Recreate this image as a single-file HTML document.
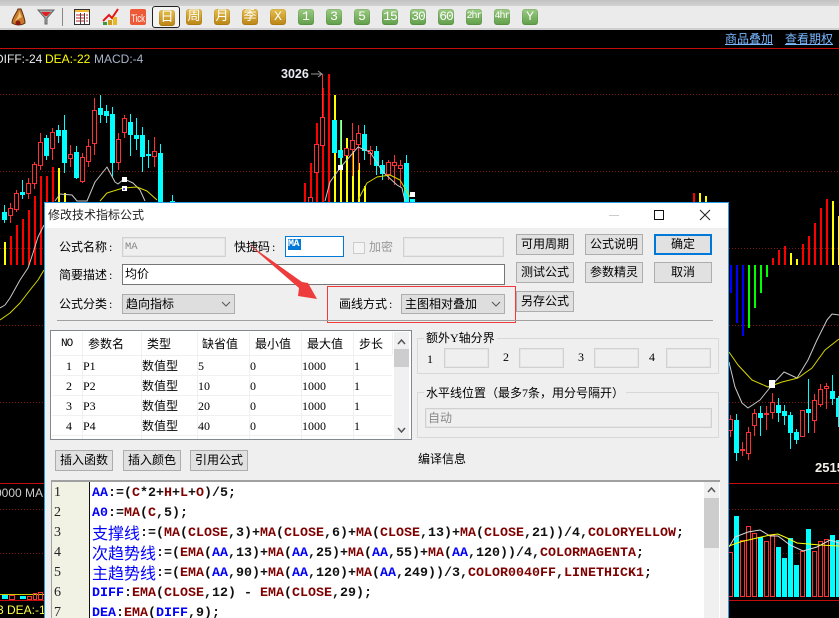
<!DOCTYPE html>
<html><head><meta charset="utf-8"><style>
html,body{margin:0;padding:0;background:#000;overflow:hidden}
#p{position:relative;width:839px;height:618px;overflow:hidden;background:#000;font-family:"Liberation Serif","WenQuanYi Zen Hei","Noto Sans CJK SC",sans-serif;font-size:12px;color:#000}
#p div,#p span.a,#p a{position:absolute;box-sizing:border-box}
em{font-style:normal;margin-left:2px}
.l{white-space:nowrap;line-height:16px;height:16px}
.tb{width:16px;height:16px;top:9px;border-radius:3px;color:#fff;text-align:center;font:13px/16px "Liberation Mono","WenQuanYi Zen Hei",monospace;box-shadow:inset 0 0 0 1px rgba(0,0,0,.08)}
.g{background:linear-gradient(#e6c050,#ba8414)}
.n{background:linear-gradient(#9ccb84,#5f9e48)}
.b{background:#e1e1e1;border:1.5px solid #adadad;height:21px;width:58px;text-align:center;line-height:18px;white-space:nowrap;font-size:12px}
.i{background:#efefef;border:1px solid #d0d0d0;box-shadow:inset 0 0 0 1px #e6e6e6;height:20px}
.s{background:#dedede;border:1px solid #adadad;height:20px;line-height:18px;padding-left:3px;white-space:nowrap}
.gb{border:1px solid #d8d8d8;left:417px;width:302px}
.c{left:92px;margin-top:2px;white-space:pre;font:bold 13.33px/20px "Liberation Mono",monospace;height:20px;color:#111}
.c u{text-decoration:none;color:#0000ff}.c i{font-style:normal;color:#800000}
.c b{display:inline-block;position:relative;top:-2px;height:20px;vertical-align:top;font:16px/20px "WenQuanYi Zen Hei","Noto Sans CJK SC",sans-serif;color:#0000ff}
.n1{left:54px;margin-top:1px;font:14px/20px "Liberation Serif",serif;color:#222;height:20px}
</style></head><body><div id="p">
<!-- toolbar -->
<div style="left:0;top:0;width:839px;height:6px;background:linear-gradient(#c2c2c2,#d2d2d2)"></div>
<div style="left:0;top:6px;width:839px;height:22px;background:#ebebeb"></div>
<div style="left:0;top:28px;width:839px;height:2px;background:#cfcfcf"></div>
<svg style="position:absolute;left:0;top:0" width="150" height="30">
<path d="M12 23C12 18 16 14 18 9L21 9C23 14 25 19 25 23C21 26 15 25 12 23Z" fill="#c77a2c" stroke="#5c2d0c"/><path d="M15 21C18 17 19 14 19 11L22 17Z" fill="#f0c070"/><circle cx="18" cy="23" r="2.500" fill="#8a1c10"/>
<path d="M38 10H54L47 18V24H45V18Z" fill="#aaa" stroke="#666"/><path d="M41 12H51L47 16H45Z" fill="#e02020"/>
<rect x="62" y="8" width="1" height="18" fill="#888"/>
<rect x="74.500" y="9.500" width="15" height="15" fill="#fff" stroke="#333"/><rect x="75" y="10" width="14" height="2" fill="#f2b830"/><path d="M76 15H88M76 18H88M76 21H88" stroke="#c02020" stroke-dasharray="4 1"/><path d="M80.500 13V24M84.500 13V24" stroke="#444"/>
<path d="M103 21L109 15L112 18L118 9" fill="none" stroke="#e01818" stroke-width="2"/><rect x="103" y="22" width="4" height="3" fill="#3a9a3a"/><rect x="108" y="20" width="4" height="5" fill="#d09a20"/><rect x="113" y="17" width="4" height="8" fill="#e8b820"/>
<rect x="130" y="9" width="16" height="16" rx="2" fill="#ee5a38"/>
<text x="131" y="22" font-family="Liberation Sans" font-size="11" fill="#fff" textLength="14" lengthAdjust="spacingAndGlyphs">Tick</text>
</svg>
<div style="left:152px;top:6px;width:28px;height:22px;border:1px solid #222;border-radius:3px;background:#f4f4f4"></div>
<div class="tb g" style="left:159px;top:10px;width:16px">日</div>
<div class="tb g" style="left:186px">周</div><div class="tb g" style="left:214px">月</div><div class="tb g" style="left:242px">季</div><div class="tb g" style="left:270px">X</div>
<div class="tb n" style="left:298px">1</div><div class="tb n" style="left:326px">3</div><div class="tb n" style="left:354px">5</div>
<div class="tb n" style="left:382px;letter-spacing:-1px">15</div><div class="tb n" style="left:410px;letter-spacing:-1px">30</div><div class="tb n" style="left:438px;letter-spacing:-1px">60</div>
<div class="tb n" style="left:466px;font-size:10px;letter-spacing:-1px">2hr</div><div class="tb n" style="left:494px;font-size:10px;letter-spacing:-1px">4hr</div><div class="tb n" style="left:522px">Y</div>
<!-- chart -->
<svg style="position:absolute;left:0;top:0" width="839" height="618">
<g stroke="#7a1414" stroke-dasharray="1 2" fill="none"><path d="M0 94.500H839M0 171.500H839M0 248.500H839M0 325.500H839M0 402.500H839M0 509.500H839M0 553.500H839"/></g>
<path d="M0 48.500H839M0 483.500H839M0 600.500H839" stroke="#c40c0c" fill="none"/>
<g fill="#ff0000">
<path d="M10 236h2v29h-2zM16 225h2v40h-2zM22 219h2v46h-2zM28 210h2v55h-2zM34 196h2v69h-2zM40 176h2v89h-2zM46 176h2v30h-2zM52 167h2v40h-2zM304 183h2v20h-2zM310 163h2v40h-2zM316 123h2v80h-2zM322 88h2v115h-2zM328 74h2v129h-2z"/>
<path d="M772 258h2v7h-2zM778 250h2v15h-2zM784 246h2v19h-2zM802 244h2v21h-2zM808 236h2v29h-2zM814 223h2v42h-2zM820 208h2v57h-2zM826 199h2v66h-2zM693 193h2v10h-2z"/>
</g>
<g fill="#ffff00">
<path d="M4 242h2v23h-2zM58 168h2v35h-2zM64 193h2v10h-2zM334 95h2v108h-2zM340 120h2v83h-2zM346 138h2v65h-2zM352 151h2v52h-2zM358 163h2v40h-2zM364 186h2v17h-2z"/>
<path d="M790 253h2v12h-2zM796 259h2v6h-2zM832 201h2v64h-2zM838 216h2v49h-2zM699 193h2v10h-2zM705 196h2v7h-2z"/>
</g>
<path d="M730 265h2v28h-2zM736 265h2v58h-2zM742 265h2v71h-2z" fill="#0000ff"/>
<path d="M748 265h2v63h-2zM754 265h2v43h-2zM760 265h2v28h-2zM766 265h2v12h-2z" fill="#00ff00"/>
<!-- wicks cyan -->
<path fill="none" stroke="#00ffff" d="M4.500 205V223M22.500 180V199M46.500 135V160M58.500 125V143M64.500 115V173M76.500 146V179M100.500 95V123M106.500 105V123M112.500 107V177M130.500 114V156M136.500 118V150M142.500 127V172M148.500 140V168M160.500 144V203M172.500 195V203M340.500 120V165M364.500 125V160M376.500 146V175M382.500 160V180M406.500 155V203M736.500 414V461M760.500 406V436M778.500 398V422M784.500 405V425M790.500 412V449M796.500 429V444M808.500 379V433M832.500 375V405M838.500 396V427"/>
<!-- wicks red -->
<path fill="none" stroke="#ff3030" d="M10.500 203V223M16.500 190V212M28.500 178V199M34.500 162V189M40.500 133V170M52.500 128V160M70.500 145V167M82.500 153V183M88.500 139V167M94.500 98V155M118.500 133V170M124.500 115V138M154.500 137V167M352.500 123V176M358.500 125V170M370.500 146V165M388.500 160V180M394.500 155V185M400.500 160V187M322.500 74V117M730.500 415V437M742.500 442V456M748.500 427V460M754.500 409V436M766.500 406V430M772.500 393V419M814.500 394V433M820.500 384V407M826.500 383V409"/>
<path d="M311 74H321M318 71L322 74L318 77" stroke="#999" fill="none"/>
<!-- cyan bodies -->
<path fill="#00ffff" d="M2 212h5v8h-5zM20 192h5v3h-5zM44 138h5v18h-5zM56 130h5v6h-5zM62 130h5v33h-5zM74 152h5v26h-5zM98 108h5v7h-5zM104 111h5v5h-5zM110 114h5v49h-5zM128 122h5v13h-5zM134 135h5v4h-5zM140 135h5v22h-5zM146 154h5v2h-5zM158 153h5v50h-5zM170 201h5v2h-5zM332 120h5v33h-5zM338 150h5v8h-5zM362 134h5v17h-5zM374 151h5v15h-5zM380 165h5v9h-5zM404 163h5v40h-5zM410 199h5v4h-5zM734 420h5v33h-5zM758 413h5v5h-5zM776 405h5v8h-5zM782 411h5v5h-5zM788 415h5v18h-5zM794 432h5v8h-5zM806 409h5v4h-5zM830 391h5v8h-5zM836 398h3v19h-3z"/>
<!-- red bodies -->
<path fill="#000" stroke="#ff3030" d="M8.500 208.500h4v7h-4zM14.500 193.500h4v16h-4zM26.500 183.500h4v10h-4zM32.500 164.500h4v19h-4zM38.500 142.500h4v23h-4zM50.500 132.500h4v16h-4zM68.500 154.500h4v4h-4zM80.500 157.500h4v24h-4zM86.500 146.500h4v15h-4zM92.500 110.500h4v33h-4zM116.500 139.500h4v23h-4zM122.500 118.500h4v14h-4zM152.500 151.500h4v5h-4zM314.500 144.500h4v28h-4zM320.500 117.500h4v28h-4zM344.500 148.500h4v7h-4zM350.500 140.500h4v9h-4zM356.500 133.500h4v11h-4zM368.500 150.500h4v3h-4zM386.500 162.500h4v12h-4zM392.500 162.500h4v3h-4zM398.500 165.500h4v3h-4zM308.500 197.500h4v6h-4zM728.500 419.500h4v11h-4zM740.500 449.500h4v1h-4zM746.500 432.500h4v21h-4zM752.500 413.500h4v12h-4zM764.500 413.500h4v1h-4zM770.500 402.500h4v10h-4zM800.500 410.500h4v26h-4zM812.500 400.500h4v20h-4zM818.500 389.500h4v15h-4zM824.500 386.500h4v2h-4z"/>
<!-- MA lines -->
<g fill="none" stroke-linejoin="round">
<path stroke="#c8c8c8" d="M0 308L5 305L10 298L20 280L28 268L33 253L38 237L44 225M55 201L60 194L72 195L77 201L87 201L95 182L107 167L115 182L118 184L124 179L133 183L140 190L145 201M325 201L330 182L340 168L358 147L370 152L383 172L397 185L402 188L405 201M729 362L735 387L742 403L748 408L760 400L772 385L784 372L797 378L808 360L817 340L827 320L832 314L839 315"/>
<path stroke="#d8d800" d="M0 320L10 313L20 303L30 290L38 280L44 270M100 201L107 193L123 188L137 187L147 191L157 200M358 200L367 183L377 177L390 175L400 180L410 197M729 352L738 365L752 380L768 387L782 382L798 378L812 368L825 350L839 339"/>
</g>
<path fill="#fff" d="M122 177h5v5h-5zM122 186h5v5h-5zM338 165h5v5h-5zM410 192h5v5h-5zM769 380h6v4h-6zM769 384h6v4h-6z"/>
<path fill="#55f" d="M123 188h2v2h-2z"/>
<!-- volume -->
<path fill="#00ffff" d="M734 516h5v81h-5zM758 537h5v60h-5zM776 547h5v50h-5zM782 558h5v39h-5zM788 538h5v59h-5zM794 565h5v32h-5zM806 529h5v68h-5zM830 535h5v62h-5zM836 540h3v57h-3z"/>
<path fill="#000" stroke="#ff3030" d="M728.500 552.500h4v44h-4zM740.500 540.500h4v56h-4zM746.500 526.500h4v70h-4zM752.500 533.500h4v63h-4zM764.500 541.500h4v55h-4zM770.500 535.500h4v61h-4zM800.500 551.500h4v45h-4zM812.500 551.500h4v45h-4zM818.500 541.500h4v55h-4zM824.500 539.500h4v57h-4z"/>
<path fill="none" stroke="#ddd" d="M729 547L735 537L748 532L760 530L770 536L778 536L790 545L803 551L817 547L830 540L839 543"/>
<path fill="none" stroke="#ffff00" d="M729 546L740 542L757 538L770 535L778 534L787 538L797 543L820 545L839 546"/>
<!-- bottom left mini -->
<path d="M0 594.500H44" stroke="#ffff00" opacity=".8"/>
<path d="M2 595h6v4h-6zM20 596h6v3h-6z" fill="#00ffff"/>
<path d="M9.500 595.500h5v4h-5zM27.500 596.500h4v3h-4zM33.500 593.500h3v6h-3zM38.500 592.500h4v7h-4z" fill="none" stroke="#ff3030"/>
</svg>
<span class="a l" style="left:-5px;top:51px;font:12px/16px 'Liberation Sans',sans-serif;color:#e8e8e8">DIFF:-24</span>
<span class="a l" style="left:45px;top:51px;font:12px/16px 'Liberation Sans',sans-serif;color:#ffff00">DEA:-22</span>
<span class="a l" style="left:94px;top:51px;font:12px/16px 'Liberation Sans',sans-serif;color:#a8b4c8">MACD:-4</span>
<span class="a l" style="left:281px;top:66px;font:bold 12.500px/16px 'Liberation Sans',sans-serif;color:#e8ecf4">3026</span>
<span class="a l" style="left:815px;top:460px;font:bold 13px/16px 'Liberation Sans',sans-serif;color:#f4f0e8">2515</span>
<span class="a l" style="left:-5px;top:485px;font:12px/16px 'Liberation Sans',sans-serif;color:#ccc">0000 MA</span>
<span class="a l" style="left:-3px;top:602px;font:12px/16px 'Liberation Sans',sans-serif;color:#ffff40">3 DEA:-1</span>
<a class="l" style="left:725px;top:31px;font-size:12px;color:#7ab8ff;text-decoration:underline">商品叠加</a>
<a class="l" style="left:785px;top:31px;font-size:12px;color:#7ab8ff;text-decoration:underline">查看期权</a>
<!-- dialog -->
<div style="left:44px;top:202px;width:685px;height:420px;background:#efefef;border:1px solid #2a9fe8">
</div>
<div style="left:45px;top:203px;width:683px;height:25px;background:#fff"></div>
<div class="l" style="left:48px;top:207px;font-size:12px;color:#222">修改技术指标公式</div>
<svg style="position:absolute;left:600px;top:205px" width="120" height="20"><path d="M9 10.500H19" stroke="#ccc"/><rect x="54.500" y="5.500" width="9" height="9" fill="none" stroke="#111"/><path d="M100 5L110 15M110 5L100 15" stroke="#222" fill="none"/></svg>

<div class="l" style="left:59px;top:239px">公式名称<em>:</em></div>
<div class="i" style="left:122px;top:237px;width:104px;font:10.500px/18px 'Liberation Mono',monospace;color:#888;padding-left:2px">MA</div>
<div class="l" style="left:234px;top:239px">快捷码<em>:</em></div>
<div style="left:285px;top:236px;width:59px;height:21px;background:#fff;border:1px solid #0078d7"></div>
<div style="left:288px;top:239px;width:13px;height:11px;background:#0078d7;color:#fff;font:bold 10px/11px 'Liberation Mono',monospace;letter-spacing:-.5px">MA</div>
<div style="left:353px;top:242px;width:12px;height:12px;border:1px solid #ccc;background:#f4f4f4"></div>
<div class="l" style="left:369px;top:239px;font-size:12px;color:#999">加密</div>
<div class="i" style="left:403px;top:237px;width:101px"></div>
<div class="l" style="left:59px;top:267px">简要描述<em>:</em></div>
<div style="left:122px;top:264px;width:383px;height:21px;background:#fff;border:1px solid #767676;padding-left:2px;line-height:18px">均价</div>
<div class="l" style="left:59px;top:296px">公式分类<em>:</em></div>
<div class="s" style="left:122px;top:294px;width:113px">趋向指标</div>
<div class="l" style="left:339px;top:296px">画线方式<em>:</em></div>
<div class="s" style="left:401px;top:294px;width:104px">主图相对叠加</div>
<svg style="position:absolute;left:0;top:0" width="839" height="618">
<path d="M222 302L226 306L230 302M492 302L496 306L500 302" fill="none" stroke="#555"/>
<rect x="327.500" y="286.500" width="188" height="36" fill="none" stroke="#f23a3a"/>
</svg>
<div style="left:57px;top:320px;width:656px;height:1px;background:#a0a0a0"></div>
<div class="b" style="left:516px;top:234px">可用周期</div><div class="b" style="left:585px;top:234px">公式说明</div>
<div class="b" style="left:654px;top:234px;border:2px solid #0078d7;line-height:17px">确定</div>
<div class="b" style="left:516px;top:262px">测试公式</div><div class="b" style="left:585px;top:262px">参数精灵</div><div class="b" style="left:654px;top:262px">取消</div>
<div class="b" style="left:516px;top:291px">另存公式</div>
<!-- table -->
<div style="left:50px;top:330px;width:362px;height:110px;background:#fff;border:1px solid #828790"></div>
<svg style="position:absolute;left:0;top:0" width="420" height="445">
<path d="M82.500 332V439M141.500 332V439M197.500 332V439M249.500 332V439M301.500 332V439M353.500 332V439M392.500 332V355" stroke="#f0f0f0" fill="none"/>
<path d="M52 355.500H392M52 375.500H392M52 395.500H392M52 415.500H392M52 435.500H392" stroke="#f0f0f0" fill="none"/>
<rect x="394" y="332" width="15" height="107" fill="#f0f0f0"/><rect x="394" y="349" width="15" height="18" fill="#cdcdcd"/>
<path d="M398 344L401.500 340L405 344M398 428L401.500 432L405 428" fill="none" stroke="#555" stroke-width="1.500"/>
</svg>
<div class="l" style="left:61px;top:336px;font-size:11px;font-family:'Liberation Mono',monospace;letter-spacing:-1px">NO</div>
<div class="l" style="left:88px;top:336px">参数名</div><div class="l" style="left:147px;top:336px">类型</div><div class="l" style="left:202px;top:336px">缺省值</div><div class="l" style="left:255px;top:336px">最小值</div><div class="l" style="left:307px;top:336px">最大值</div><div class="l" style="left:359px;top:336px">步长</div>
<div class="l" style="left:66px;top:358px">1</div><div class="l" style="left:83px;top:358px">P1</div><div class="l" style="left:142px;top:358px">数值型</div><div class="l" style="left:198px;top:358px">5</div><div class="l" style="left:250px;top:358px">0</div><div class="l" style="left:302px;top:358px">1000</div><div class="l" style="left:354px;top:358px">1</div>
<div class="l" style="left:66px;top:378px">2</div><div class="l" style="left:83px;top:378px">P2</div><div class="l" style="left:142px;top:378px">数值型</div><div class="l" style="left:198px;top:378px">10</div><div class="l" style="left:250px;top:378px">0</div><div class="l" style="left:302px;top:378px">1000</div><div class="l" style="left:354px;top:378px">1</div>
<div class="l" style="left:66px;top:398px">3</div><div class="l" style="left:83px;top:398px">P3</div><div class="l" style="left:142px;top:398px">数值型</div><div class="l" style="left:198px;top:398px">20</div><div class="l" style="left:250px;top:398px">0</div><div class="l" style="left:302px;top:398px">1000</div><div class="l" style="left:354px;top:398px">1</div>
<div class="l" style="left:66px;top:418px">4</div><div class="l" style="left:83px;top:418px">P4</div><div class="l" style="left:142px;top:418px">数值型</div><div class="l" style="left:198px;top:418px">40</div><div class="l" style="left:250px;top:418px">0</div><div class="l" style="left:302px;top:418px">1000</div><div class="l" style="left:354px;top:418px">1</div>
<div class="b" style="left:55px;top:450px">插入函数</div><div class="b" style="left:123px;top:450px">插入颜色</div><div class="b" style="left:190px;top:450px">引用公式</div>
<div class="l" style="left:418px;top:451px">编译信息</div>
<!-- groups -->
<div class="gb" style="top:338px;height:36px"></div>
<div class="l" style="left:424px;top:330px;background:#efefef;padding:0 2px">额外Y轴分界</div>
<div class="l" style="left:427px;top:351px">1</div><div class="i" style="left:444px;top:348px;width:45px"></div>
<div class="l" style="left:503px;top:349px">2</div><div class="i" style="left:519px;top:348px;width:45px"></div>
<div class="l" style="left:578px;top:349px">3</div><div class="i" style="left:594px;top:348px;width:45px"></div>
<div class="l" style="left:649px;top:349px">4</div><div class="i" style="left:666px;top:348px;width:45px"></div>
<div class="gb" style="top:392px;height:46px"></div>
<div class="l" style="left:424px;top:385px;background:#efefef;padding:0 2px">水平线位置（最多7条，用分号隔开）</div>
<div class="i" style="left:425px;top:408px;width:287px;color:#888;padding-left:2px;line-height:18px">自动</div>
<!-- editor -->
<div style="left:51px;top:480px;width:669px;height:140px;background:#fff;border-top:2px solid #a0a0a0;border-left:1px solid #a0a0a0"></div>
<div style="left:52px;top:482px;width:38px;height:136px;background:#f1f1e4;border-right:1px solid #111"></div>
<div style="left:704px;top:482px;width:15px;height:136px;background:#f0f0f0"></div>
<div style="left:704px;top:498px;width:15px;height:50px;background:#cdcdcd"></div>
<svg style="position:absolute;left:704px;top:484px" width="15" height="12"><path d="M4 8L7.500 4L11 8" fill="none" stroke="#555" stroke-width="1.500"/></svg>
<div class="n1" style="top:482px">1</div><div class="n1" style="top:502px">2</div><div class="n1" style="top:522px">3</div><div class="n1" style="top:542px">4</div><div class="n1" style="top:562px">5</div><div class="n1" style="top:582px">6</div><div class="n1" style="top:602px">7</div>
<div class="c" style="top:482px"><u>AA</u>:=(<i>C</i>*2+<i>H</i>+<i>L</i>+<i>O</i>)/5;</div>
<div class="c" style="top:502px"><u>A0</u>:=<i>MA</i>(<i>C</i>,5);</div>
<div class="c" style="top:522px"><b>支撑线</b>:=(<i>MA</i>(<i>CLOSE</i>,3)+<i>MA</i>(<i>CLOSE</i>,6)+<i>MA</i>(<i>CLOSE</i>,13)+<i>MA</i>(<i>CLOSE</i>,21))/4,<i>COLORYELLOW</i>;</div>
<div class="c" style="top:542px"><b>次趋势线</b>:=(<i>EMA</i>(<u>AA</u>,13)+<i>MA</i>(<u>AA</u>,25)+<i>MA</i>(<u>AA</u>,55)+<i>MA</i>(<u>AA</u>,120))/4,<i>COLORMAGENTA</i>;</div>
<div class="c" style="top:562px"><b>主趋势线</b>:=(<i>EMA</i>(<u>AA</u>,90)+<i>MA</i>(<u>AA</u>,120)+<i>MA</i>(<u>AA</u>,249))/3,<i>COLOR0040FF</i>,<i>LINETHICK1</i>;</div>
<div class="c" style="top:582px"><u>DIFF</u>:<i>EMA</i>(<i>CLOSE</i>,12) - <i>EMA</i>(<i>CLOSE</i>,29);</div>
<div class="c" style="top:602px"><u>DEA</u>:<i>EMA</i>(<u>DIFF</u>,9);</div>
<!-- arrow -->
<svg style="position:absolute;left:0;top:0" width="839" height="618"><path d="M247 243L302 282L308 283L317 299L298 296L299 288Z" fill="#ee3b3b"/></svg>
</div></body></html>
